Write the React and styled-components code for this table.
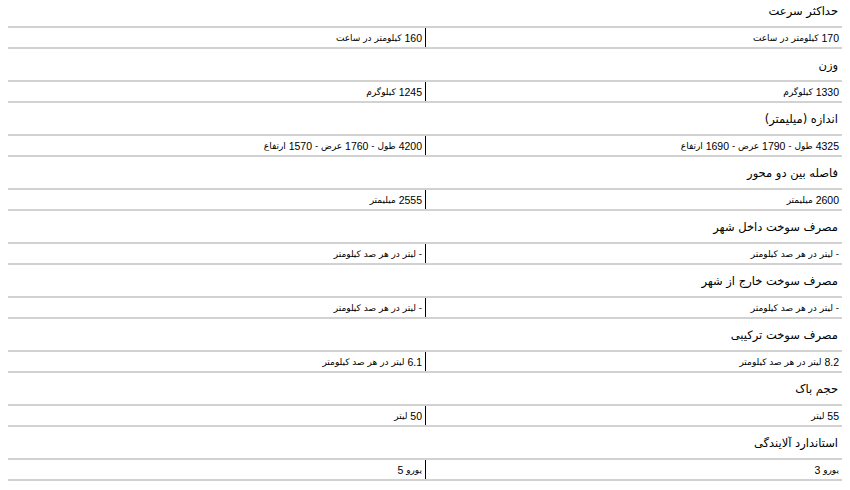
import styled, { createGlobalStyle } from "styled-components";

const GlobalStyle = createGlobalStyle`
  html, body {
    margin: 0;
    padding: 0;
    background: #fff;
  }

  body {
    font-family: "DejaVu Sans", sans-serif;
    color: #000;
    overflow: hidden;
  }
`;

const specs = [
  { title: 'حداکثر سرعت', values: ['170 کیلومتر در ساعت', '160 کیلومتر در ساعت'] },
  { title: 'وزن', values: ['1330 کیلوگرم', '1245 کیلوگرم'] },
  {
    title: 'اندازه (میلیمتر)',
    values: ['4325 طول - 1790 عرض - 1690 ارتفاع', '4200 طول - 1760 عرض - 1570 ارتفاع']
  },
  { title: 'فاصله بین دو محور', values: ['2600 میلیمتر', '2555 میلیمتر'] },
  { title: 'مصرف سوخت داخل شهر', values: ['- لیتر در هر صد کیلومتر', '- لیتر در هر صد کیلومتر'] },
  { title: 'مصرف سوخت خارج از شهر', values: ['- لیتر در هر صد کیلومتر', '- لیتر در هر صد کیلومتر'] },
  { title: 'مصرف سوخت ترکیبی', values: ['8.2 لیتر در هر صد کیلومتر', '6.1 لیتر در هر صد کیلومتر'] },
  { title: 'حجم باک', values: ['55 لیتر', '50 لیتر'] },
  { title: 'استاندارد آلایندگی', values: ['یورو 3', 'یورو 5'] },
];

// latin digits use a narrower face than the persian words
function withNumbers(text) {
  return text.split(/([\d.]+)/).map((part, i) =>
    /\d/.test(part) ? <Num key={i}>{part}</Num> : part
  );
}

const App = () => (
  <>
    <GlobalStyle />
    <SpecTable dir="rtl">
      {specs.map(spec => (
        <section key={spec.title}>
          <SpecTitle>{spec.title}</SpecTitle>
          <SpecRow>
            {spec.values.map((value, i) => (
              <SpecCell key={i} $divided={i === 0}>{withNumbers(value)}</SpecCell>
            ))}
          </SpecRow>
        </section>
      ))}
    </SpecTable>
  </>
);

export default App;

// the page is scrolled a little: the first title is cut at the top
const SpecTable = styled.div`
  margin: -5px 8px 0 8px;
  direction: rtl;
`;

const SpecTitle = styled.h3`
  margin: 0;
  height: 31px;
  display: flex;
  align-items: center;
  padding: 0 4px;
  font-size: 11.5px;
  font-weight: normal;
  border-bottom: 2px solid #d2d2d2;
`;

const SpecRow = styled.div`
  display: grid;
  grid-template-columns: 1fr 1fr;
  height: 19px;
  border-bottom: 2px solid #d2d2d2;
`;

const SpecCell = styled.div`
  display: flex;
  align-items: center;
  padding: 0 3px;
  font-size: 9px;
  white-space: pre;
  border-left: ${props => props.$divided ? '1px solid #000' : 'none'};
`;

const Num = styled.span`
  font-family: "Liberation Sans", Arial, sans-serif;
  font-size: 10.5px;
`;
